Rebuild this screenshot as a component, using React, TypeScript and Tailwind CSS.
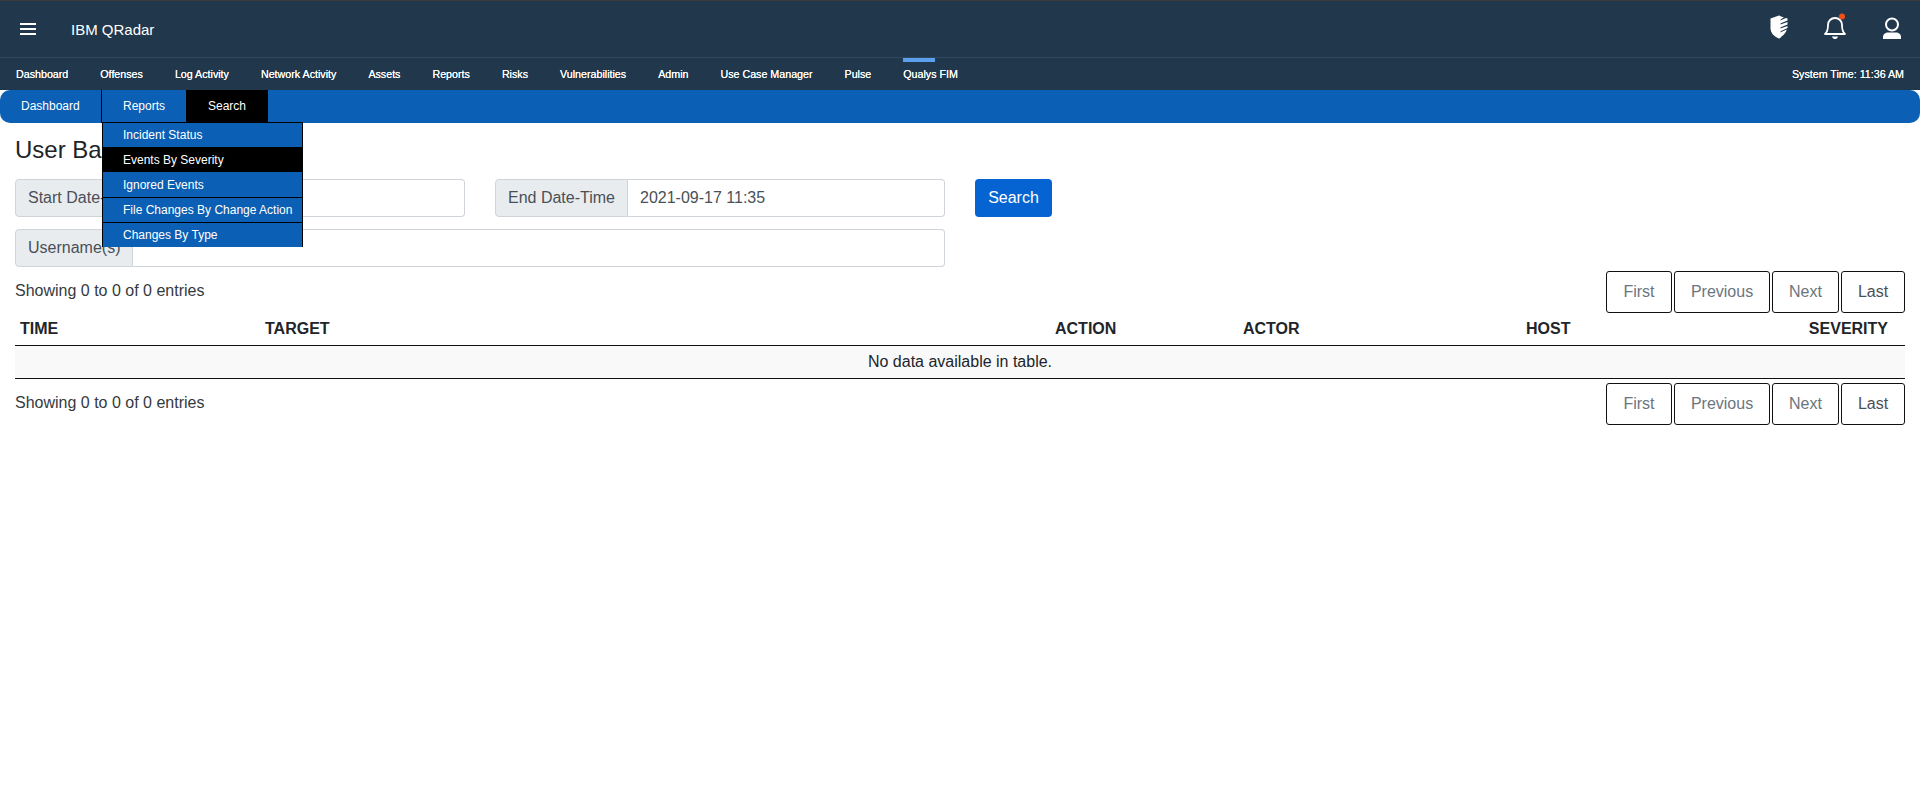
const navItems = ['Dashboard', 'Offenses', 'Log Activity', 'Network Activity', 'Assets', 'Reports', 'Risks', 'Vulnerabilities', 'Admin', 'Use Case Manager', 'Pulse', 'Qualys FIM']
const reportItems = ['Incident Status', 'Events By Severity', 'Ignored Events', 'File Changes By Change Action', 'Changes By Type']
const pageButtons = [
  { label: 'First', cls: 'w-[66px] text-[#6c757d]' },
  { label: 'Previous', cls: 'w-[96px] text-[#6c757d]' },
  { label: 'Next', cls: 'w-[67px] text-[#6c757d]' },
  { label: 'Last', cls: 'w-[64px] text-[#495057]' },
]

function ShieldIcon() {
  return (
    <svg width="18" height="24" viewBox="0 0 18 24" fill="none">
      <path d="M9 0.5 L0.5 3.5 V13 C0.5 18 4 21.5 9 23.5 L10.5 22.8 V1 Z" fill="white" />
      <path d="M9 1 L14 2.2 L9 5.5 Z M9 6 L16 3 L17.5 3.6 V5.5 L9 9 Z M9 10 L17.5 7 V9.5 L9 13 Z M9 14 L17.5 11 V13 L9 17 Z M9 18 L16.8 14.5 C16 17.5 14 20 9 23.5 Z" fill="white" />
    </svg>
  )
}

function BellIcon() {
  return (
    <svg width="24" height="28" viewBox="0 0 24 28" fill="none">
      <path d="M2 21 C4.5 19 5 16 5 12 C5 8 8 5 12 5 C16 5 19 8 19 12 C19 16 19.5 19 22 21 Z" stroke="white" strokeWidth="1.8" strokeLinejoin="round" />
      <path d="M9 23.5 H15 C14.5 25.5 13 26 12 26 C11 26 9.5 25.5 9 23.5 Z" fill="white" />
      <circle cx="19" cy="3.5" r="3" fill="#f04e12" />
    </svg>
  )
}

function UserIcon() {
  return (
    <svg className="mt-[4px]" width="20" height="24" viewBox="0 0 20 24" fill="none">
      <circle cx="10" cy="7.5" r="6" stroke="white" strokeWidth="2" />
      <path d="M1 22 V20 C1 17 3.5 15.5 6 15.5 H14 C16.5 15.5 19 17 19 20 V22 Z" fill="white" />
    </svg>
  )
}

function InputGroup({ label, labelCls, value, cls }: { label: string; labelCls: string; value?: string; cls: string }) {
  return (
    <div className={`flex h-[38px] ${cls}`}>
      <div className={`flex items-center whitespace-nowrap overflow-hidden rounded-l-[4px] border border-[#ced4da] bg-[#e9ecef] pl-3 text-base text-[#495057] ${labelCls}`}>{label}</div>
      <div className="flex flex-1 items-center rounded-r-[4px] border border-l-0 border-[#ced4da] bg-white px-3 text-base text-[#495057]">{value}</div>
    </div>
  )
}

function EntriesRow({ className }: { className: string }) {
  return (
    <div className={`flex justify-between ${className}`}>
      <span className="pt-[8px] text-base text-[#343a40]">Showing 0 to 0 of 0 entries</span>
      <div className="flex gap-[2px]">
        {pageButtons.map((b) => (
          <button key={b.label} className={`flex h-[42px] items-center justify-center rounded-[3px] border border-[#111] bg-white text-base ${b.cls}`}>{b.label}</button>
        ))}
      </div>
    </div>
  )
}

export default function App() {
  return (
    <div className="min-h-[803px] bg-white font-['Liberation_Sans',Arial,sans-serif]">
      {/* Top bar */}
      <header className="flex h-[58px] items-center justify-between border-t border-b border-t-[#3a3a3a] border-b-[#2f4a60] bg-[#20374c] pl-5 pr-[18px] text-white">
        <div className="flex items-center">
          <svg width="16" height="12" viewBox="0 0 16 12" fill="white"><rect width="16" height="2" /><rect y="5" width="16" height="2" /><rect y="10" width="16" height="2" /></svg>
          <span className="ml-[35px] pt-[2px] text-[15px]">IBM QRadar</span>
        </div>
        <div className="flex items-center gap-[35px] pb-[4px]">
          <ShieldIcon />
          <BellIcon />
          <UserIcon />
        </div>
      </header>

      {/* Main nav */}
      <nav className="flex h-[32px] items-center justify-between bg-[#20374c] pl-4 pr-[16px] text-[10.7px] text-white">
        <div className="flex gap-[32px]">
          {navItems.map((item) => (
            <a key={item} className="relative whitespace-nowrap [text-shadow:0_0_0.4px_white]">
              {item}
              {item === 'Qualys FIM' && <span className="absolute left-0 top-[-8px] h-[4px] w-[32px] bg-[#5aa0ef]" />}
            </a>
          ))}
        </div>
        <span className="[text-shadow:0_0_0.4px_white]">System Time: 11:36 AM</span>
      </nav>

      {/* Sub nav */}
      <div className="flex h-[33px] rounded-[10px] bg-[#0b5fb4] text-xs text-white">
        <a className="flex w-[101px] items-center pb-[2px] pl-[21px]">Dashboard</a>
        <div className="relative flex w-[85px] items-center border-l border-black pb-[2px] pl-[21px]">
          Reports
          <div className="absolute left-0 top-[32px] z-10 w-[201px] border-x border-t border-black">
            {reportItems.map((item, i) => (
              <div
                key={item}
                className={`flex items-center pl-5 text-xs ${i === 0 ? 'h-[24px]' : 'h-[25px]'} ${i === 1 ? 'bg-black' : 'bg-[#0b5fb4]'} ${i > 2 ? 'border-t border-black' : ''}`}
              >
                {item}
              </div>
            ))}
          </div>
        </div>
        <a className="flex w-[82px] items-center justify-center bg-black pb-[2px]">Search</a>
      </div>

      <main className="px-[15px]">
        <h2 className="mt-[12px] text-2xl leading-[29px] text-[#212529]">User Baseline</h2>

        <div className="mt-[15px] flex">
          <InputGroup label="Start Date-Time" labelCls="w-[133px]" cls="w-[450px]" />
          <InputGroup label="End Date-Time" labelCls="w-[133px]" value="2021-09-17 11:35" cls="ml-[30px] w-[450px]" />
          <button className="ml-[30px] h-[38px] w-[77px] rounded-[4px] bg-[#0564d1] text-base text-white">Search</button>
        </div>
        <InputGroup label="Username(s)" labelCls="w-[118px]" cls="mt-[12px] w-[930px]" />

        <EntriesRow className="mt-[4px] items-start" />

        <div className="-mt-px grid h-[33px] grid-cols-[245px_790px_188px_283px_1fr_auto] items-center pl-[5px] pr-[17px] text-base font-bold text-[#212529]">
          <span>TIME</span>
          <span>TARGET</span>
          <span>ACTION</span>
          <span>ACTOR</span>
          <span>HOST</span>
          <span>SEVERITY</span>
        </div>
        <div className="flex h-[34px] items-center justify-center border-y border-[#111] bg-[#f9f9f9] text-base text-[#212529]">No data available in table.</div>

        <EntriesRow className="mt-[4px] items-start" />
      </main>
    </div>
  )
}
